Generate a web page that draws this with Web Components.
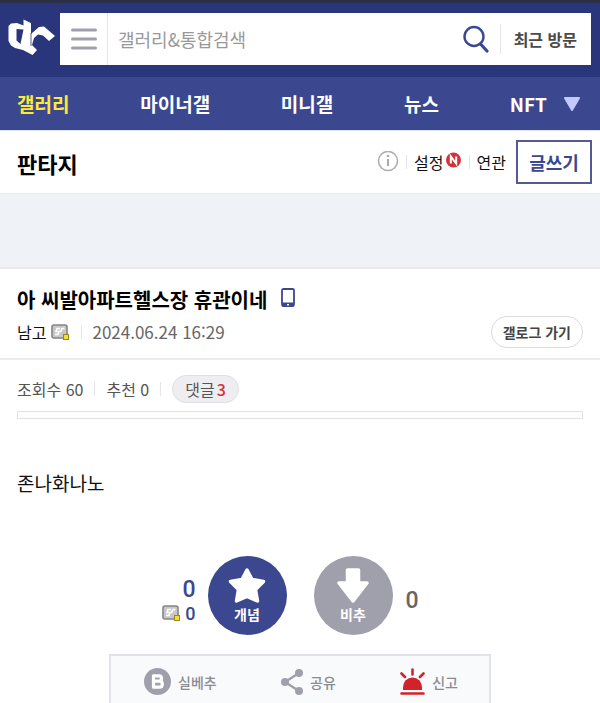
<!DOCTYPE html>
<html lang="ko">
<head>
<meta charset="utf-8">
<meta name="viewport" content="width=device-width, initial-scale=1">
<title>판타지 갤러리</title>
<style>
  body {
    background: #fff;
    color: #111;
    font-family: "Noto Sans CJK KR", sans-serif;
    font-size: 16px;
    line-height: 24px;
    margin: 0;
    --navy: #29367c;
    --blue: #3b4890;
    --gray: #a09fac;
    --line: #e4e4e9;
    --edge: 17px;
  }
</style>
</head>
<body>

<gall-page>
  <search-header slot="header"></search-header>
  <main-nav slot="header">
    <a href="#gallery" aria-current="page">갤러리</a>
    <a href="#minor">마이너갤</a>
    <a href="#mini">미니갤</a>
    <a href="#news">뉴스</a>
    <a href="#nft">NFT</a>
  </main-nav>
  <gall-title>판타지</gall-title>
  <ad-band></ad-band>
  <post-head>
    <span slot="title">아 씨발아파트헬스장 휴관이네</span>
    <span slot="writer">남고</span>
    <time slot="date" datetime="2024-06-24T16:29">2024.06.24 16:29</time>
  </post-head>
  <post-stats views="60" likes="0" comments="3"></post-stats>
  <post-body>존나화나노</post-body>
  <vote-panel up="0" member="0" down="0"></vote-panel>
  <share-bar></share-bar>
</gall-page>

<script>
/*
 *  Helpers
 */

const define = (name, html, setup) => {

  const template = document.createElement('template')
  template.innerHTML = html

  customElements.define(name, class extends HTMLElement {

    constructor() {

      super()
      this.attachShadow({ mode: 'open' })
      this.shadowRoot.appendChild(template.content.cloneNode(true))

    }

    connectedCallback() {

      if (setup) setup(this, this.shadowRoot)

    }

  })

}

const fillCounts = (host, root) => {

  root.querySelectorAll('[data-count]').forEach(el => {
    el.textContent = host.getAttribute(el.dataset.count)
  })

}

const reset = `
  * { box-sizing: border-box; }
  svg { display: block; flex: none; }
  a { color: inherit; text-decoration: none; }
  button {
    background: none;
    border: 0;
    color: inherit;
    cursor: pointer;
    font: inherit;
    padding: 0;
  }
`

/*
 *  Small parts
 */

define('v-rule', `
  <style>
    :host {
      background: var(--line);
      display: block;
      flex: none;
      height: 14px;
      width: 1px;
    }
  </style>
`)

define('member-icon', `
  <style>
    :host { display: block; flex: none; }
    svg { display: block; }
  </style>
  <svg width="19" height="17" viewBox="0 0 19 17" aria-hidden="true">
    <rect x="1" y="1" width="15" height="13" rx="2" fill="#c8c8c8" stroke="#858585" stroke-width="1.600"/>
    <path d="M9 4.500H6L5 7.500H8L7 10.500H4M13.500 4.500H11L9.500 8" fill="none" stroke="#fff" stroke-width="1.600"/>
    <rect x="12.500" y="10.500" width="5" height="5" fill="#f3df2f" stroke="#9a8420"/>
  </svg>
`)

/*
 *  Page
 */

define('gall-page', `
  <style>
    :host { display: block; }
  </style>
  <header><slot name="header"></slot></header>
  <main><slot></slot></main>
`)

/*
 *  Header - Search
 */

define('search-header', `
  <style>
    ${reset}
    :host {
      align-items: center;
      background: var(--navy);
      border-top: 3px solid #2c3147;
      display: flex;
      gap: 5px;
      padding: 10px 9px 12px 7px;
    }
    form {
      align-items: center;
      background: #fff;
      display: flex;
      flex: 1;
      height: 52px;
      min-width: 0;
    }
    .menu {
      align-items: center;
      align-self: stretch;
      border-right: 1px solid var(--line);
      display: flex;
      justify-content: center;
      width: 48px;
    }
    input {
      background: none;
      border: 0;
      color: #333;
      flex: 1;
      font: inherit;
      font-size: 18px;
      height: 28px;
      line-height: 28px;
      min-width: 0;
      outline: 0;
      padding: 0 10px;
    }
    input::placeholder { color: #999; opacity: 1; }
    v-rule { height: 30px; margin: 0 13px 0 11px; }
    .recent {
      color: #4a4a4a;
      font-weight: 700;
      margin-right: 14px;
    }
  </style>
  <a href="#home" aria-label="홈">
    <svg width="48" height="40" viewBox="0 0 48 40" aria-hidden="true">
      <path d="M1.500 7L4 4.500L10 4L16.500 6.500V.5L24 4V15L32 8L37 7.500L48 17L42 22L36 16.500L31 15.500L27 19L25 26L30 31L25.500 36L16 31L8 29L4 26.500L1.500 22ZM9.500 10V21.500L13.500 25L16.500 10.500Z" fill="#fff" fill-rule="evenodd"/>
      <path d="M24 14V27" stroke="#29367c" stroke-width=".8"/>
    </svg>
  </a>
  <form role="search">
    <button class="menu" type="button" aria-label="메뉴">
      <svg width="26" height="22" viewBox="0 0 26 22" aria-hidden="true">
        <path d="M1.500 2H24.500M1.500 11H24.500M1.500 20H24.500" stroke="#a09fac" stroke-width="3" stroke-linecap="round"/>
      </svg>
    </button>
    <input type="search" aria-label="검색" placeholder="갤러리&amp;통합검색">
    <button type="submit" aria-label="찾기">
      <svg width="26" height="28" viewBox="0 0 26 28" aria-hidden="true">
        <circle cx="11" cy="11.500" r="9.500" fill="none" stroke="#3b4890" stroke-width="2.400"/>
        <path d="M17.500 19L24 26" stroke="#3b4890" stroke-width="3.200" stroke-linecap="round"/>
      </svg>
    </button>
    <v-rule></v-rule>
    <button class="recent" type="button">최근 방문</button>
  </form>
`)

/*
 *  Header - Navigation
 */

define('main-nav', `
  <style>
    ${reset}
    :host {
      align-items: center;
      background: var(--blue);
      color: #fff;
      display: flex;
      font-size: 19px;
      font-weight: 700;
      gap: 16px;
      line-height: 53px;
      padding: 0 19px 0 var(--edge);
    }
    nav {
      display: flex;
      flex: 1;
      justify-content: space-between;
    }
    ::slotted(a) {
      color: inherit;
      text-decoration: none;
    }
    ::slotted(a[aria-current]) { color: #fde93b; }
  </style>
  <nav><slot></slot></nav>
  <button type="button" aria-label="더보기">
    <svg width="18" height="14" viewBox="0 0 18 14" aria-hidden="true">
      <path d="M2 1H16L9 13Z" fill="#c3caff" stroke="#c3caff" stroke-width="2" stroke-linejoin="round"/>
    </svg>
  </button>
`)

/*
 *  Gallery - Title row
 */

define('gall-title', `
  <style>
    ${reset}
    :host {
      align-items: center;
      border-bottom: 1px solid #e9ecf2;
      border-top: 1px solid #dfe5f8;
      display: flex;
      justify-content: space-between;
      padding: 9px 8px 9px var(--edge);
    }
    h1 {
      color: #000;
      font-size: 22px;
      line-height: 32px;
      margin: 2px 0 0;
    }
    .tools {
      align-items: center;
      display: flex;
      gap: 7px;
    }
    .setting {
      align-items: center;
      display: flex;
      gap: 1px;
    }
    .write {
      border: 2px solid #525b92;
      color: var(--blue);
      font-size: 18px;
      font-weight: 700;
      height: 44px;
      margin-left: 3px;
      width: 76px;
    }
  </style>
  <h1><slot></slot></h1>
  <div class="tools">
    <button type="button" aria-label="정보">
      <svg width="22" height="22" viewBox="0 0 22 22" aria-hidden="true">
        <circle cx="11" cy="10" r="9.500" fill="none" stroke="#b0b0b0" stroke-width="1.600"/>
        <path d="M11 8V15" stroke="#aaa" stroke-width="2"/>
        <circle cx="11" cy="5" r="1.300" fill="#aaa"/>
      </svg>
    </button>
    <v-rule></v-rule>
    <a class="setting" href="#setting">설정
      <svg width="17" height="20" viewBox="0 0 17 20" aria-hidden="true">
        <circle cx="8.500" cy="8" r="7.500" fill="#d2323c"/>
        <path d="M5.800 11.500V4.500L11.200 11.500V4.500" fill="none" stroke="#fff" stroke-width="2"/>
      </svg>
    </a>
    <v-rule></v-rule>
    <a href="#related">연관</a>
    <button class="write" type="button">글쓰기</button>
  </div>
`)

define('ad-band', `
  <style>
    :host {
      background: #eff3f8;
      border-bottom: 2px solid #e9e9ef;
      box-sizing: border-box;
      display: block;
      height: 75px;
    }
  </style>
`)

/*
 *  Post - Head
 */

define('post-head', `
  <style>
    ${reset}
    :host {
      border-bottom: 2px solid #ebebee;
      display: block;
      padding: 15px var(--edge) 10px;
    }
    h2 {
      align-items: center;
      color: #000;
      display: flex;
      font-size: 20px;
      gap: 14px;
      line-height: 32px;
      margin: 0;
    }
    .meta {
      align-items: center;
      display: flex;
    }
    member-icon { margin: 0 11px 0 5px; }
    .date {
      color: #666;
      flex: 1;
      font-size: 17px;
      margin-left: 10px;
    }
    .log {
      border: 1px solid #dcdcdc;
      border-radius: 16px;
      color: #444;
      font-size: 14px;
      font-weight: 700;
      line-height: 30px;
      padding: 0 11px;
    }
  </style>
  <h2>
    <slot name="title"></slot>
    <svg width="14" height="24" viewBox="0 0 14 24" aria-hidden="true">
      <rect x="1" y="1" width="12" height="17" rx="1.500" fill="#fff" stroke="#3b4890" stroke-width="1.800"/>
      <path d="M1 14.500H13V17.500Q13 19 11.500 19H2.500Q1 19 1 17.500Z" fill="#3b4890"/>
      <rect x="6" y="16" width="2" height="1.500" fill="#fff"/>
    </svg>
  </h2>
  <div class="meta">
    <slot name="writer"></slot>
    <member-icon></member-icon>
    <v-rule></v-rule>
    <span class="date"><slot name="date"></slot></span>
    <a class="log" href="#log">갤로그 가기</a>
  </div>
`)

/*
 *  Post - Counts
 */

define('post-stats', `
  <style>
    ${reset}
    :host {
      color: #555;
      display: block;
      padding: 15px var(--edge) 0;
    }
    .row {
      align-items: center;
      display: flex;
      gap: 11px;
    }
    .reply {
      background: #eeeef1;
      border: 1px solid #dedee4;
      border-radius: 14px;
      display: flex;
      gap: 2px;
      line-height: 26px;
      padding: 0 12px;
    }
    .reply b { color: #d2323c; font-weight: 500; }
    .frame {
      border: 1px solid #e2e2e4;
      height: 8px;
      margin-top: 8px;
    }
  </style>
  <div class="row">
    <span>조회수 <span data-count="views"></span></span>
    <v-rule></v-rule>
    <span>추천 <span data-count="likes"></span></span>
    <v-rule></v-rule>
    <a class="reply" href="#comments">댓글<b data-count="comments"></b></a>
  </div>
  <div class="frame"></div>
`, fillCounts)

define('post-body', `
  <style>
    :host {
      display: block;
      font-size: 19px;
      line-height: 28px;
      padding: 50px var(--edge) 59px;
    }
  </style>
  <slot></slot>
`)

/*
 *  Post - Votes
 */

define('vote-panel', `
  <style>
    ${reset}
    :host {
      align-items: center;
      display: grid;
      grid-template-columns: 1fr auto auto 1fr;
      justify-content: center;
    }
    .up,
    .down {
      font-family: Roboto, sans-serif;
      font-size: 23px;
      font-weight: 500;
      line-height: 27px;
    }
    .up {
      color: var(--blue);
      display: grid;
      justify-items: end;
      padding: 9px 12px 0 0;
    }
    .member {
      align-items: center;
      display: flex;
      font-size: 18px;
      gap: 4px;
      line-height: 22px;
    }
    .round {
      align-items: center;
      background: var(--blue);
      border-radius: 50%;
      color: #fff;
      display: flex;
      flex-direction: column;
      font-size: 14px;
      font-weight: 700;
      height: 79px;
      line-height: 20px;
      padding-top: 11px;
      width: 79px;
    }
    .nay { background: var(--gray); margin-left: 27px; }
    .down {
      color: #666;
      padding: 10px 0 0 13px;
    }
  </style>
  <div class="up">
    <span data-count="up"></span>
    <span class="member"><member-icon></member-icon><span data-count="member"></span></span>
  </div>
  <button class="round" type="button">
    <svg width="38" height="37" viewBox="0 0 38 37" aria-hidden="true">
      <path d="M19 3L24 12.500L35.500 14.500L27.500 22.500L29.500 34L19 29.500L8.500 34L10.500 22.500L2.500 14.500L14 12.500Z" fill="#fff" stroke="#fff" stroke-width="3.500" stroke-linejoin="round"/>
    </svg>
    개념
  </button>
  <button class="round nay" type="button">
    <svg width="34" height="37" viewBox="0 0 34 37" aria-hidden="true">
      <path d="M11.500 3H22.500V16H31L17 34L3 16H11.500Z" fill="#fff" stroke="#fff" stroke-width="3.500" stroke-linejoin="round"/>
    </svg>
    비추
  </button>
  <span class="down" data-count="down"></span>
`, fillCounts)

/*
 *  Post - Share
 */

define('share-bar', `
  <style>
    ${reset}
    :host {
      background: #f8fafc;
      border: 2px solid #e1e1e8;
      border-bottom: 0;
      box-sizing: border-box;
      color: #8b8b92;
      display: flex;
      font-size: 14px;
      font-weight: 500;
      justify-content: space-between;
      margin: 19px auto 0;
      max-width: 382px;
      padding: 12px 31px 8px 33px;
    }
    button {
      align-items: center;
      display: flex;
      gap: 7px;
    }
  </style>
  <button type="button">
    <svg width="27" height="27" viewBox="0 0 27 27" aria-hidden="true">
      <circle cx="13.500" cy="13.500" r="13.500" fill="#a09fac"/>
      <path d="M9.500 7.800H15Q17.500 7.800 17.500 10.500Q17.500 13.200 15 13.200H9.500H15.500Q18.300 13.200 18.300 16.200Q18.300 19.200 15.500 19.200H9.500Z" fill="none" stroke="#fff" stroke-width="3.200" stroke-linejoin="round"/>
    </svg>
    실베추
  </button>
  <button type="button">
    <svg width="22" height="26" viewBox="0 0 22 26" aria-hidden="true">
      <path d="M18 4L4 13L18 22" fill="none" stroke="#a09fac" stroke-width="2.400"/>
      <circle cx="18" cy="4" r="4" fill="#a09fac"/>
      <circle cx="4" cy="13" r="4" fill="#a09fac"/>
      <circle cx="18" cy="22" r="4" fill="#a09fac"/>
    </svg>
    공유
  </button>
  <button type="button">
    <svg width="25" height="27" viewBox="0 0 25 27" aria-hidden="true">
      <path d="M3 22V19A9.500 9.500 0 0 1 22 19V22Z" fill="#d2232a"/>
      <path d="M1.500 25.500H23.500M12.500 1.500V6.500M1.500 5.500L5 9M23.500 5.500L20 9" fill="none" stroke="#d2232a" stroke-width="2.600" stroke-linecap="round"/>
    </svg>
    신고
  </button>
`)
</script>
</body>
</html>
